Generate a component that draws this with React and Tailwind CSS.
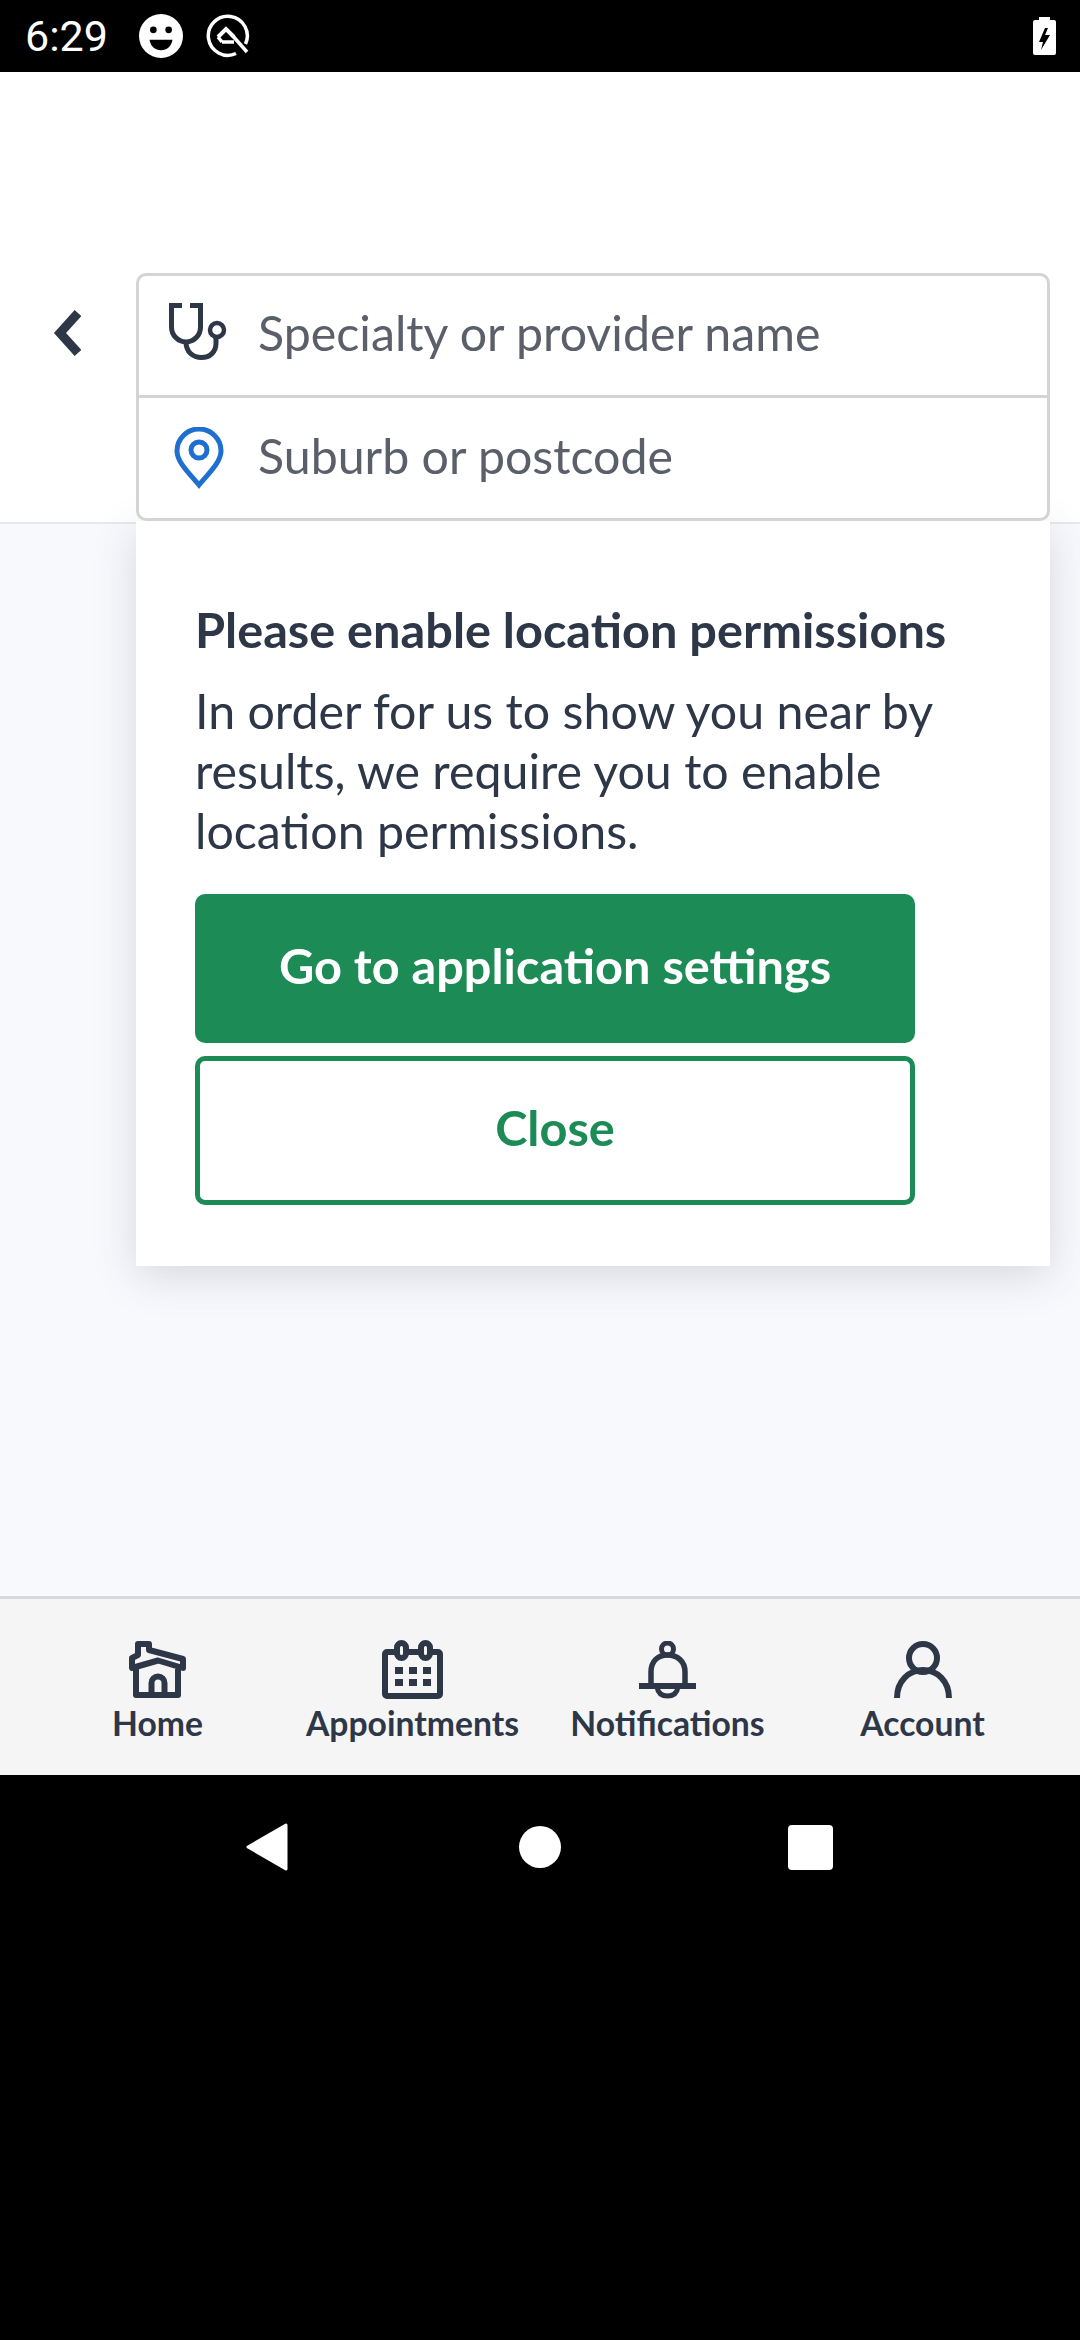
import React from "react";

const ink = "#2d3748";

const Face = () => (
  <svg width="44" height="44" viewBox="0 0 46 46">
    <circle cx="23" cy="23" r="23" fill="#fff" />
    <circle cx="15" cy="16.5" r="3.5" fill="#000" />
    <circle cx="31" cy="16.5" r="3.5" fill="#000" />
    <path d="M11 27h24c-1 7-6 11-12 11s-11-4-12-11z" fill="#000" />
  </svg>
);

const QLogo = () => (
  <svg width="44" height="44" viewBox="0 0 44 44" fill="none" stroke="#fff" strokeWidth="3.5">
    <path d="M30 39.5A19.5 19.5 0 1 1 39.5 30" />
    <path d="M12 23l8-8 8 8" strokeWidth="4" />
    <path d="M16 28l-4-5M16 28h12" strokeWidth="3.5" />
    <path d="M26 21l15 17" strokeWidth="3.5" />
  </svg>
);

const Battery = () => (
  <svg width="23" height="38" viewBox="0 0 23 38">
    <path d="M6 0h11v3h4a2 2 0 0 1 2 2v31a2 2 0 0 1-2 2H2a2 2 0 0 1-2-2V5a2 2 0 0 1 2-2h4z" fill="#fff" />
    <path d="M12 11l-6 14h4l-2 8 9-15h-5l3-7z" fill="#000" />
  </svg>
);

const Stethoscope = () => (
  <svg width="60" height="60" viewBox="0 0 60 60" fill="none" stroke={ink} strokeWidth="5">
    <path d="M13 2.5H2.5V24a14.5 15 0 0 0 29 0V2.5H21" />
    <path d="M17 39c0 10 7 15.500 15.500 15.500S47 49 47 40v-6" />
    <circle cx="48" cy="27" r="7" strokeWidth="4.500" />
  </svg>
);

const Pin = () => (
  <svg width="50" height="62" viewBox="0 0 50 62" fill="none" stroke="#1f6fd0" strokeWidth="5">
    <path d="M25 58C15 46 3 35 3 24a22 22 0 0 1 44 0c0 11-12 22-22 34z" />
    <circle cx="25" cy="23" r="8" />
  </svg>
);

const HomeIcon = () => (
  <svg width="58" height="58" viewBox="0 0 58 58" fill="none" stroke={ink} strokeWidth="6" strokeLinejoin="round">
    <path d="M9 14V3h11v6l34 9v9L29 19.500 3 27V17z" />
    <path d="M7 28v26h42V28" />
    <path d="M22.500 54V42a6.500 6.500 0 0 1 13 0v12" />
  </svg>
);

const CalendarIcon = () => (
  <svg width="62" height="60" viewBox="0 0 62 60" fill="none" stroke={ink} strokeWidth="6" strokeLinejoin="round">
    <rect x="3" y="12" width="55" height="44" rx="2" />
    <rect x="15" y="3" width="9" height="15" rx="4.500" fill="#f5f5f5" />
    <rect x="39" y="3" width="9" height="15" rx="4.500" fill="#f5f5f5" />
    <g fill={ink} stroke="none">
      <rect x="13" y="27" width="8" height="7" />
      <rect x="27" y="27" width="8" height="7" />
      <rect x="41" y="27" width="8" height="7" />
      <rect x="13" y="39" width="8" height="7" />
      <rect x="27" y="39" width="8" height="7" />
      <rect x="41" y="39" width="8" height="7" />
    </g>
  </svg>
);

const BellIcon = () => (
  <svg width="58" height="58" viewBox="0 0 58 58" fill="none" stroke={ink} strokeWidth="5.500">
    <circle cx="28.500" cy="8" r="6" strokeWidth="5" />
    <path d="M12 45V31c0-11 7-17 16.500-17S46 20 46 31v14" />
    <path d="M0 45h57" strokeWidth="6" />
    <path d="M18 46c1 6 5 9 10.500 9S38 52 39 46" strokeWidth="5" />
  </svg>
);

const UserIcon = () => (
  <svg width="58" height="58" viewBox="0 0 58 58" fill="none" stroke={ink} strokeWidth="6">
    <circle cx="29" cy="17" r="14" />
    <path d="M3 57c0-17 12-28 26-28s26 11 26 28" />
  </svg>
);

const navItems = [
  { label: "Home", icon: <HomeIcon /> },
  { label: "Appointments", icon: <CalendarIcon /> },
  { label: "Notifications", icon: <BellIcon /> },
  { label: "Account", icon: <UserIcon /> },
];

export default function App() {
  return (
    <div className="w-[1080px] h-[2340px] flex flex-col bg-black font-['Lato',sans-serif]">
      {/* Status bar */}
      <div className="h-[72px] flex-none flex items-center pl-[25px] pr-[24px] bg-black">
        <span className="text-[43px] leading-none text-white font-['Roboto',sans-serif] w-[114px]">6:29</span>
        <div className="flex items-center gap-[23px]">
          <Face />
          <QLogo />
        </div>
        <div className="ml-auto">
          <Battery />
        </div>
      </div>

      {/* Search header */}
      <div className="h-[452px] flex-none bg-white border-b-[2px] border-[#e6e8ec] flex pt-[201px] pl-[51px] relative">
        <div className="w-[85px] pt-[36px]">
          <svg width="30" height="48" viewBox="0 0 30 48" fill="none" stroke={ink} strokeWidth="9">
            <path d="M27 4L9 24l18 20" />
          </svg>
        </div>
        <div className="w-[914px] h-[248px] border-[3px] border-[#d4d4d6] rounded-[10px] bg-white flex flex-col relative z-10">
          <div className="h-[122px] flex items-center pl-[30px] pb-[6px] gap-[29px] border-b-[3px] border-[#d4d4d6]">
            <Stethoscope />
            <span className="text-[48.3px] text-[#5a5f69]">Specialty or provider name</span>
          </div>
          <div className="flex-1 flex items-center pl-[35px] pb-[6px] gap-[34px]">
            <div className="mt-[6px]">
              <Pin />
            </div>
            <span className="text-[48.3px] text-[#5a5f69]">Suburb or postcode</span>
          </div>
        </div>
      </div>

      {/* Main area */}
      <div className="h-[1072px] flex-none bg-[#f8f9fd] relative">
        <div className="absolute left-[136px] top-[-3px] w-[914px] h-[745px] bg-white shadow-[0_10px_40px_rgba(60,70,90,0.18)] pt-[78px] pl-[59px] pr-[60px]">
          <h1 className="text-[48.7px] leading-[60px] font-bold whitespace-nowrap" style={{ color: ink }}>
            Please enable location permissions
          </h1>
          <p className="mt-[21px] text-[48.3px] leading-[60px] w-[790px]" style={{ color: ink }}>
            In order for us to show you near by results, we require you to enable location permissions.
          </p>
          <button className="mt-[34px] block w-[720px] h-[149px] pb-[5px] rounded-[10px] bg-[#1c8b56] text-white text-[48.7px] font-bold">
            Go to application settings
          </button>
          <button className="mt-[13px] block w-[720px] h-[149px] pb-[5px] rounded-[10px] border-[5px] border-[#1c8b56] bg-white text-[#1c8b56] text-[48.7px] font-bold">
            Close
          </button>
        </div>
      </div>

      {/* Bottom nav */}
      <div className="h-[179px] flex-none bg-[#f5f5f5] border-t-[3px] border-[#d5d8dc] flex justify-center pt-[41px]">
        {navItems.map((item) => (
          <div key={item.label} className="w-[255px] flex flex-col items-center">
            <div className="h-[60px] flex items-center">{item.icon}</div>
            <span className="text-[33.7px] leading-[40px] font-bold mt-[3px]" style={{ color: ink }}>
              {item.label}
            </span>
          </div>
        ))}
      </div>

      {/* Android nav */}
      <div className="h-[144px] flex-none bg-black flex items-center pl-[245px]">
        <svg width="44" height="50" viewBox="0 0 44 50">
          <path d="M41 3L3 25l38 22z" fill="#fff" stroke="#fff" strokeWidth="3" strokeLinejoin="round" />
        </svg>
        <div className="ml-[230px] w-[42px] h-[42px] rounded-full bg-white" />
        <div className="ml-[227px] w-[45px] h-[45px] rounded-[4px] bg-white" />
      </div>
      <div className="flex-1 bg-black" />
    </div>
  );
}
